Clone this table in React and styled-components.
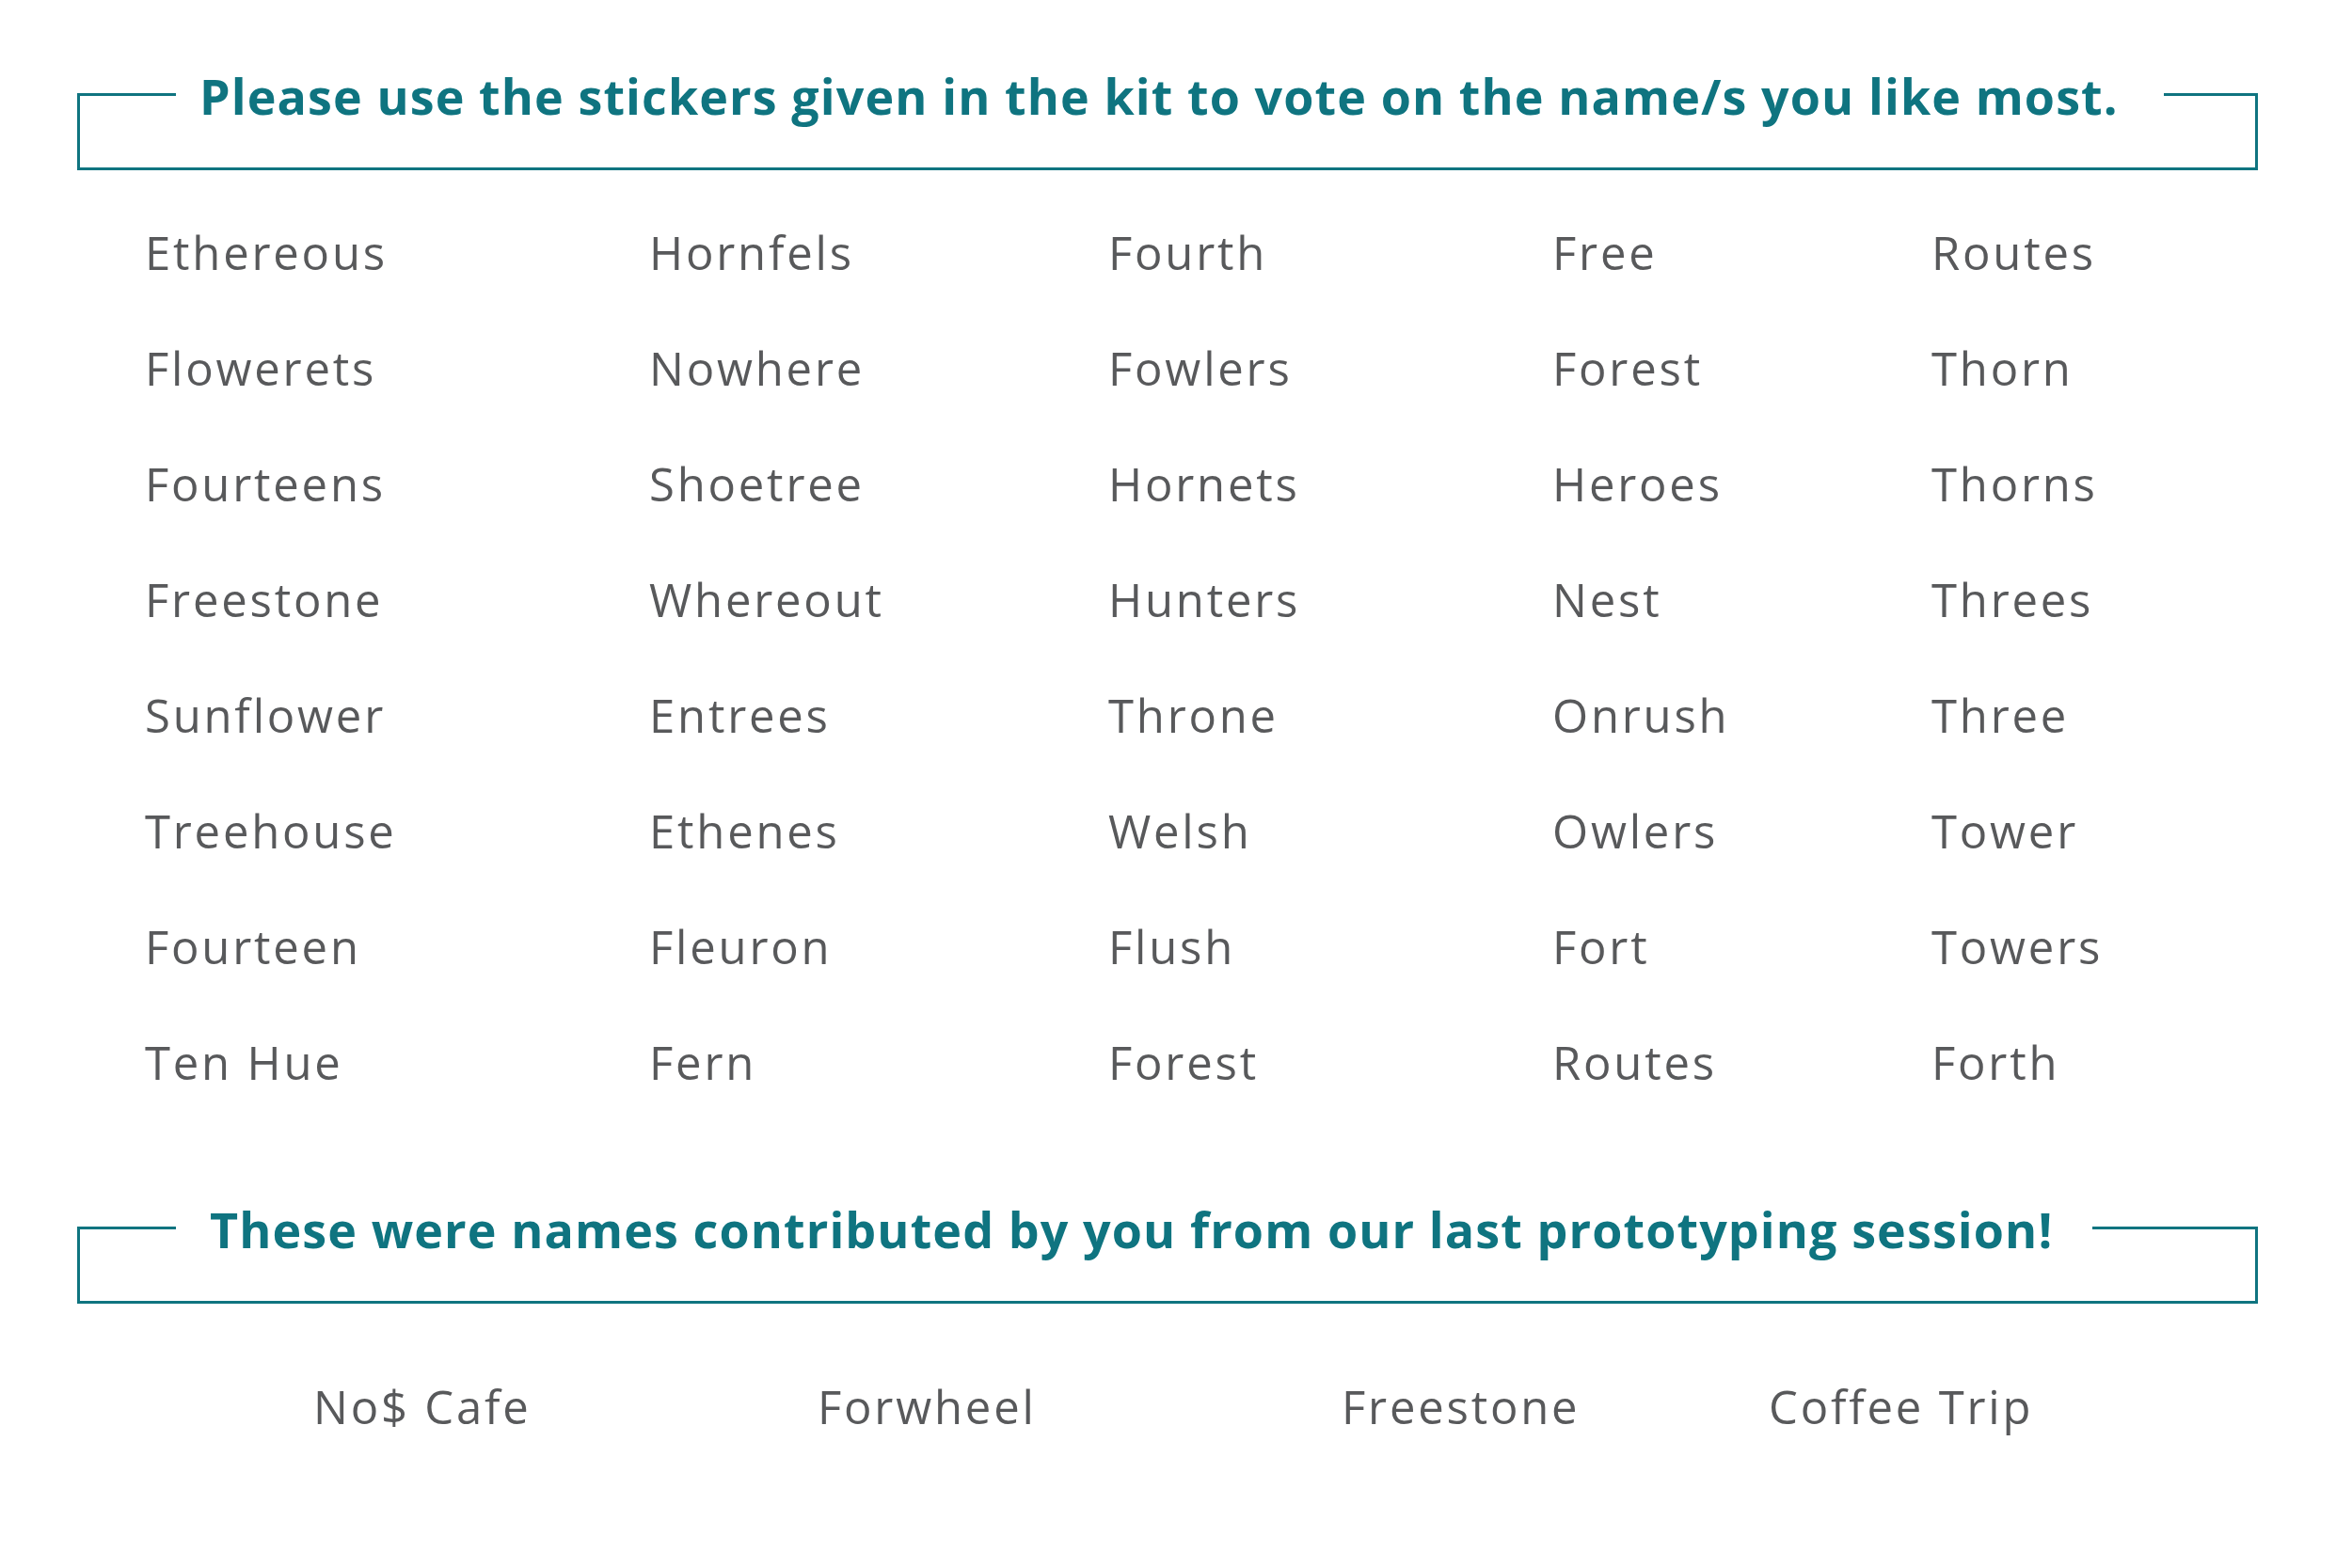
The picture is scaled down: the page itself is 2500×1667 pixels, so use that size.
import React from "react";
import styled, { createGlobalStyle } from "styled-components";

const GlobalStyle = createGlobalStyle`
  html, body {
    margin: 0;
    padding: 0;
    background: #ffffff;
  }
  body {
    font-family: "Open Sans", "Liberation Sans", sans-serif;
  }
`;

const TEAL = "#0f7480";
const GREY = "#58595b";

const Page = styled.div`
  width: 2500px;
  height: 1667px;
  box-sizing: border-box;
  padding: 68px 100px 0 82px;
`;

// fieldset gives the heading box its cut top border
const Frame = styled.fieldset`
  margin: ${(p) => p.$top}px 0 0;
  padding: 0 0 ${(p) => p.$bottom}px;
  border: 3px solid ${TEAL};
  min-width: 0;
`;

const Title = styled.legend`
  margin-left: 102px;
  padding: 4px ${(p) => p.$gapR}px 0 ${(p) => p.$gapL}px;
  font-family: "Open Sans", "Liberation Sans", sans-serif;
  font-weight: 700;
  font-size: 52px;
  line-height: 60px;
  letter-spacing: 1.1px;
  color: ${TEAL};
  white-space: nowrap;
`;

const NameGrid = styled.div`
  display: grid;
  grid-template-columns: ${(p) => p.$cols};
  grid-auto-rows: 123px;
  padding-left: ${(p) => p.$indent}px;
  margin-top: ${(p) => p.$top}px;
`;

const Name = styled.div`
  font-family: "Open Sans", "Liberation Sans", sans-serif;
  font-weight: 400;
  font-size: 49px;
  line-height: 60px;
  letter-spacing: 2.8px;
  color: ${GREY};
  white-space: nowrap;
`;

const voteNames = [
  ["Ethereous", "Hornfels", "Fourth", "Free", "Routes"],
  ["Flowerets", "Nowhere", "Fowlers", "Forest", "Thorn"],
  ["Fourteens", "Shoetree", "Hornets", "Heroes", "Thorns"],
  ["Freestone", "Whereout", "Hunters", "Nest", "Threes"],
  ["Sunflower", "Entrees", "Throne", "Onrush", "Three"],
  ["Treehouse", "Ethenes", "Welsh", "Owlers", "Tower"],
  ["Fourteen", "Fleuron", "Flush", "Fort", "Towers"],
  ["Ten Hue", "Fern", "Forest", "Routes", "Forth"],
];

const pastNames = ["No$ Cafe", "Forwheel", "Freestone", "Coffee Trip"];

export default function App() {
  return (
    <Page>
      <GlobalStyle />
      <Frame $top={0} $bottom={46}>
        <Title $gapL={25} $gapR={48}>
          Please use the stickers given in the kit to vote on the name/s you like most.
        </Title>
      </Frame>

      <NameGrid $cols="536px 488px 472px 403px auto" $indent={72} $top={57}>
        {voteNames.flat().map((name, i) => (
          <Name key={i}>{name}</Name>
        ))}
      </NameGrid>

      <Frame $top={51} $bottom={46}>
        <Title $gapL={36} $gapR={42}>
          These were names contributed by you from our last prototyping session!
        </Title>
      </Frame>

      <NameGrid $cols="536px 557px 454px auto" $indent={251} $top={79}>
        {pastNames.map((name) => (
          <Name key={name}>{name}</Name>
        ))}
      </NameGrid>
    </Page>
  );
}
